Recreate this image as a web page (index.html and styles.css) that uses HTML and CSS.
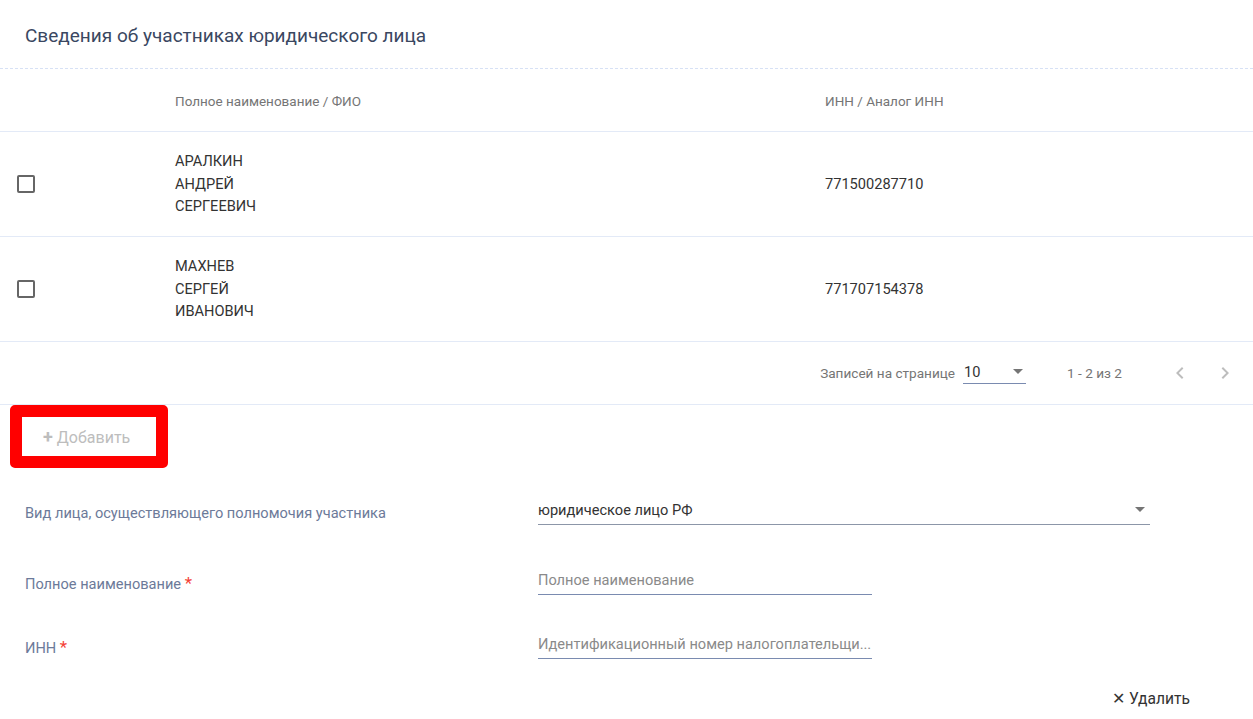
FILE: index.html
```html
<!DOCTYPE html>
<html lang="ru">

<head>
    <meta charset="UTF-8">
    <meta name="viewport" content="width=device-width, initial-scale=1.0">
    <title>Участники</title>
    <link rel="stylesheet" href="styles.css">
</head>

<body>
    <section class="card">
        <h2 class="card-title">Сведения об участниках юридического лица</h2>

        <div class="grid">
            <div class="row head">
                <div class="cell check"></div>
                <div class="cell name">Полное наименование / ФИО</div>
                <div class="cell inn">ИНН / Аналог ИНН</div>
            </div>
            <div class="row">
                <div class="cell check"><span class="box"></span></div>
                <div class="cell name">АРАЛКИН<br>АНДРЕЙ<br>СЕРГЕЕВИЧ</div>
                <div class="cell inn">771500287710</div>
            </div>
            <div class="row">
                <div class="cell check"><span class="box"></span></div>
                <div class="cell name">МАХНЕВ<br>СЕРГЕЙ<br>ИВАНОВИЧ</div>
                <div class="cell inn">771707154378</div>
            </div>
            <div class="pager">
                <span class="pager-label">Записей на странице</span>
                <div class="pager-select">
                    <span>10</span>
                    <span class="caret"></span>
                </div>
                <span class="pager-range">1 - 2 из 2</span>
                <div class="pager-nav">
                    <svg width="24" height="24" viewBox="0 0 24 24"><path d="M15.4 7.4 14 6l-6 6 6 6 1.4-1.4L10.8 12z" fill="#bdbdbd"/></svg>
                    <svg width="24" height="24" viewBox="0 0 24 24"><path d="M8.6 7.4 10 6l6 6-6 6-1.4-1.4 4.6-4.6z" fill="#bdbdbd"/></svg>
                </div>
            </div>
        </div>

        <div class="add-wrap">
            <button class="btn-add" disabled><b>+</b> Добавить</button>
        </div>

        <div class="form">
            <div class="field first">
                <label>Вид лица, осуществляющего полномочия участника</label>
                <div class="control select">
                    <span>юридическое лицо РФ</span>
                    <span class="caret"></span>
                </div>
            </div>
            <div class="field">
                <label>Полное наименование <i>*</i></label>
                <div class="control input">
                    <span class="ph">Полное наименование</span>
                </div>
            </div>
            <div class="field">
                <label>ИНН <i>*</i></label>
                <div class="control input">
                    <span class="ph">Идентификационный номер налогоплательщи...</span>
                </div>
            </div>
            <div class="actions">
                <button class="btn-del">✕ Удалить</button>
            </div>
        </div>
    </section>
</body>

</html>
```

FILE: styles.css
```css
* {
    margin: 0;
    padding: 0;
    box-sizing: border-box;
}

body {
    background: #fff;
    font-family: Roboto, "Noto Sans", sans-serif;
    color: #333;
}

.card-title {
    padding: 24px 25px 0;
    height: 69px;
    font-size: 19px;
    font-weight: 400;
    color: #3a4761;
    border-bottom: 1px dashed #d7e1f5;
}

/* таблица участников */
.row {
    display: flex;
    align-items: center;
    border-bottom: 1px solid #e3eaf7;
    height: 105px;
    font-size: 14.6px;
    line-height: 22.5px;
}

.row.head {
    height: 63px;
    font-size: 13.5px;
    color: #757575;
}

.row.head .cell {
    padding-top: 2px;
}

.cell.check {
    width: 175px;
    padding-left: 17px;
}

.cell.name {
    width: 650px;
}

.box {
    display: block;
    width: 18px;
    height: 18px;
    border: 2px solid #666;
    border-radius: 2px;
}

.pager {
    display: flex;
    align-items: center;
    justify-content: flex-end;
    height: 63px;
    padding-right: 16px;
    border-bottom: 1px solid #e3eaf7;
    font-size: 13.6px;
    color: #757575;
}

.pager-select {
    display: flex;
    align-items: center;
    justify-content: space-between;
    width: 63px;
    margin-left: 8px;
    padding: 0 1px 2px;
    border-bottom: 1px solid #7a8bb0;
    font-size: 14.6px;
    color: #333;
}

.caret {
    width: 0;
    height: 0;
    border-left: 5px solid transparent;
    border-right: 5px solid transparent;
    border-top: 5px solid #757575;
    margin-right: 2px;
}

.pager-range {
    margin-left: 41px;
}

.pager-nav {
    display: flex;
    gap: 21px;
    margin-left: 46px;
}

/* кнопка добавить в красной рамке */
.add-wrap {
    padding: 0 0 0 10px;
}

.btn-add {
    width: 158px;
    height: 63px;
    border: 12px solid #ff0000;
    border-radius: 5px;
    background: #fff;
    font-family: inherit;
    font-size: 16px;
    color: #bdbdbd;
    text-align: left;
    padding-left: 21px;
}

.btn-add b {
    font-size: 18px;
}

/* форма */
.form {
    padding-top: 12px;
}

.field {
    display: flex;
    align-items: center;
    height: 64px;
    padding-left: 25px;
}

.field.first {
    margin-bottom: 6px;
}

.field label {
    width: 513px;
    font-size: 14.6px;
    color: #6c7a99;
    padding-top: 1px;
}

.field label i {
    font-style: normal;
    font-size: 17px;
    color: #f44336;
}

.control {
    display: flex;
    align-items: center;
    justify-content: space-between;
    border-bottom: 1px solid #8c96a8;
    padding: 0 0 4px;
    height: 26px;
    font-size: 14.6px;
}

.control.select {
    width: 612px;
}

.control.select .caret {
    margin-right: 5px;
}

.control.input {
    width: 334px;
    border-bottom-color: #7a8bb0;
}

.ph {
    color: #8a8a8a;
    white-space: nowrap;
}

.actions {
    display: flex;
    justify-content: flex-end;
    padding: 12px 63px 0 0;
}

.btn-del {
    border: 0;
    background: none;
    font-family: inherit;
    font-size: 15.6px;
    color: #333;
}
```
